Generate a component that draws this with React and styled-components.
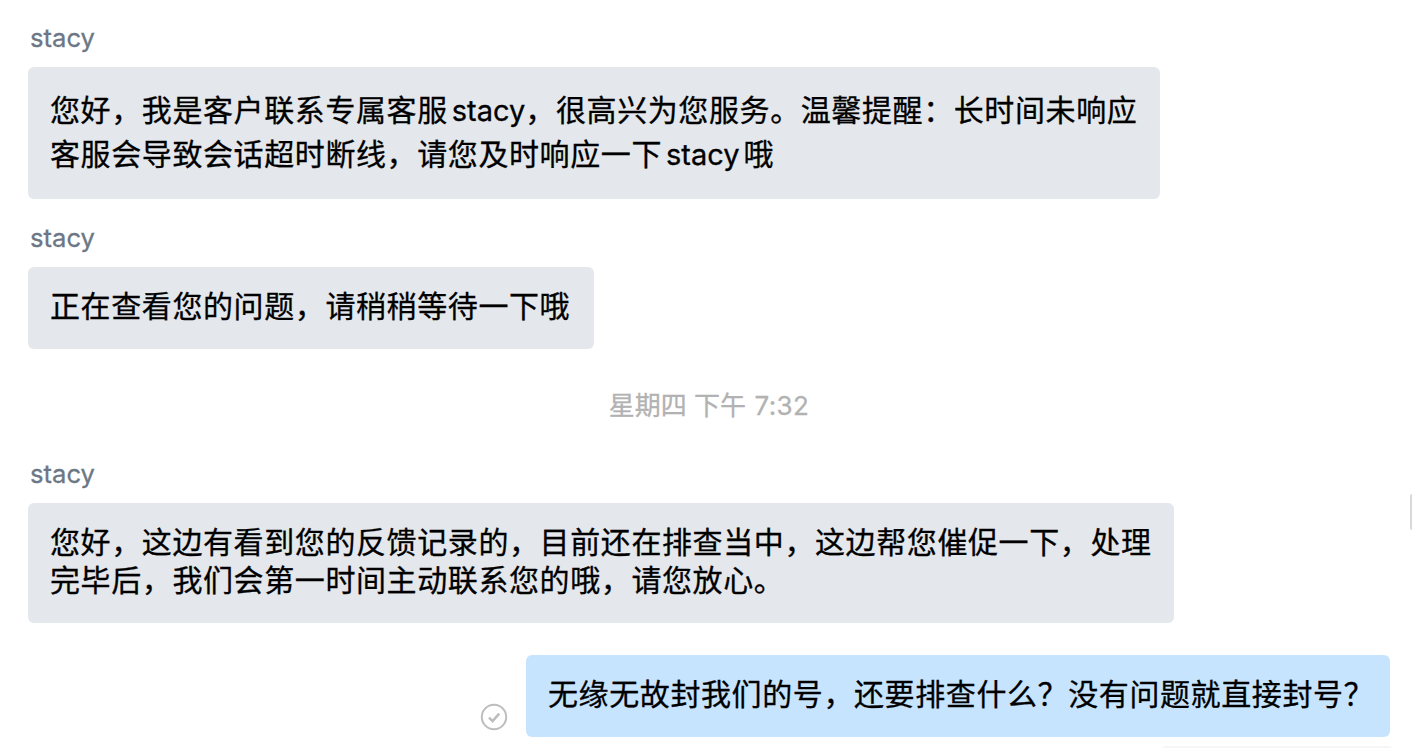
import React from 'react'
import styled, { createGlobalStyle } from 'styled-components'

const messages = [
  {
    id: 1,
    width: 1132,
    height: 132,
    line: 44,
    top: 21,
    text: ['您好，我是客户联系专属客服stacy，很高兴为您服务。温馨提醒：长时间未响应', '客服会导致会话超时断线，请您及时响应一下stacy哦'],
  },
  { id: 2, width: 566, height: 82, line: 38, top: 20, text: ['正在查看您的问题，请稍稍等待一下哦'] },
]

const latest = {
  width: 1146,
  height: 120,
  line: 38,
  top: 20,
  text: ['您好，这边有看到您的反馈记录的，目前还在排查当中，这边帮您催促一下，处理', '完毕后，我们会第一时间主动联系您的哦，请您放心。'],
}

// latin words get a little air next to chinese characters, but not before a comma
function renderLine(line) {
  const parts = line.split(/([a-z]+)/)
  return parts.map((part, i) => {
    if (i % 2 === 0) return part
    return <Latin key={i} $gap={parts[i + 1].startsWith('，') ? 0 : 4}>{part}</Latin>
  })
}

function Message({ name, message }) {
  return (
    <Received>
      <Name>{name}</Name>
      <Bubble $width={message.width} $height={message.height} $line={message.line} $top={message.top}>
        {message.text.map((line) => (
          <Line key={line}>{renderLine(line)}</Line>
        ))}
      </Bubble>
    </Received>
  )
}

function App() {
  return (
    <>
      <GlobalStyle />
      <Chat>
        {messages.map((message) => (
          <Message key={message.id} name="stacy" message={message} />
        ))}
        <Time>星期四 下午 <Clock>7:32</Clock></Time>
        <Message name="stacy" message={latest} />
        <Sent>
          <Status viewBox="0 0 28 28">
            <circle cx="14" cy="14" r="12.2" />
            <path d="M9 14.6l3.6 3.6 6.6-7.6" />
          </Status>
          <Bubble $mine $width={864} $height={82} $line={38} $top={20}>
            <Line>无缘无故封我们的号，还要排查什么？没有问题就直接封号？</Line>
          </Bubble>
        </Sent>
        <NextBubble />
        <Scrollbar />
      </Chat>
    </>
  )
}

export default App

const GlobalStyle = createGlobalStyle`
  body {
    margin: 0;
    background: #fff;
    overflow: hidden;
  }
`

const Chat = styled.div`
  position: relative;
  box-sizing: border-box;
  display: flex;
  flex-direction: column;
  height: 748px;
  padding: 19px 22px 0 28px;
  overflow: hidden;
  font-family: Inter, 'Noto Sans CJK SC', sans-serif;
`

const Received = styled.div`
  flex: none;
  margin-bottom: 20px;
`

const Name = styled.div`
  height: 48px;
  padding-left: 2px;
  color: #6b7785;
  font-size: 25.6px;
  line-height: 37px;
  -webkit-text-stroke: 0.3px;
`

const Bubble = styled.div`
  box-sizing: border-box;
  width: ${(props) => props.$width}px;
  height: ${(props) => props.$height}px;
  padding: ${(props) => props.$top}px 22px 0;
  border-radius: 6px;
  background: ${(props) => (props.$mine ? '#c7e4ff' : '#e4e7eb')};
  color: #000;
  font-size: 30px;
  letter-spacing: 0.6px;
  line-height: ${(props) => props.$line}px;
  -webkit-text-stroke: 0.3px;
`

const Line = styled.div`
  white-space: nowrap;
`

const Latin = styled.span`
  margin-left: 4px;
  margin-right: ${(props) => props.$gap}px;
  font-size: 29px;
  line-height: 1;
  letter-spacing: 0;
`

const Time = styled.div`
  flex: none;
  height: 68px;
  margin: 17px 0 1px;
  color: #b2b2b2;
  font-size: 26px;
  line-height: 40px;
  text-align: center;
  -webkit-text-stroke: 0.3px;
`

const Clock = styled.span`
  margin-left: 1px;
  letter-spacing: 0.4px;
`

const Sent = styled.div`
  flex: none;
  display: flex;
  justify-content: flex-end;
  align-items: flex-end;
  gap: 18px;
  margin-top: 12px;
`

const Status = styled.svg`
  width: 28px;
  height: 28px;
  margin-bottom: 6px;
  fill: none;
  stroke: #bdbdc0;
  stroke-width: 2;

  path {
    stroke-width: 2.6;
  }
`

const NextBubble = styled.div`
  flex: none;
  align-self: flex-end;
  width: 234px;
  height: 20px;
  margin-top: 9px;
  margin-right: -4px;
  border-radius: 6px;
  background: #f5f6f7;
`

const Scrollbar = styled.div`
  position: absolute;
  top: 494px;
  right: 0;
  width: 2px;
  height: 36px;
  border-radius: 2px 0 0 2px;
  background: #d8d8d8;
`
